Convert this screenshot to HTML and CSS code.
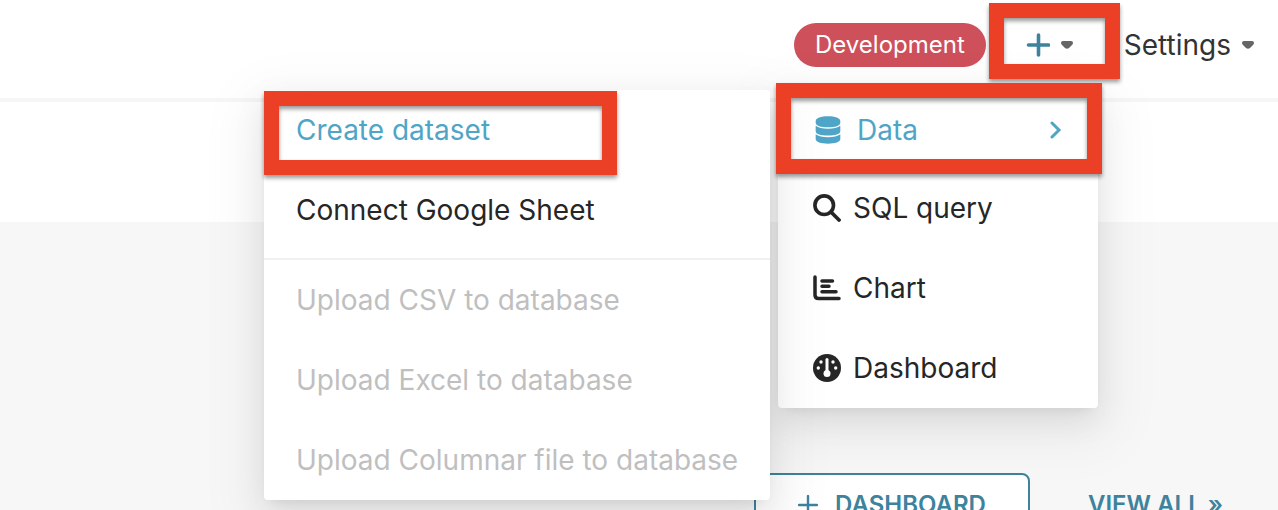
FILE: index.html
```
<!DOCTYPE html>
<html lang="en">
<head>
<meta charset="utf-8">
<title>Home</title>
<link rel="stylesheet" href="styles.css">
</head>
<body>
<header class="header">
  <span class="tag">Development</span>
  <nav class="nav" aria-label="Main">
    <div class="nav-item">
      <button class="new-button" type="button" aria-label="New" aria-expanded="true">
        <svg class="plus" viewBox="0 0 24 24" aria-hidden="true"><path d="M12.500 2v20M2.500 12h20"/></svg>
        <svg class="caret" viewBox="0 0 12 8" aria-hidden="true"><path d="M2 0h8Q12 0 12 2 12 3 11 4L8 7Q6 8.600 4 7L1 4Q0 3 0 2 0 0 2 0z"/></svg>
      </button>
      <span class="highlight highlight-new"></span>
    </div>
    <button class="settings-button" type="button">Settings
      <svg class="caret" viewBox="0 0 12 8" aria-hidden="true"><path d="M2 0h8Q12 0 12 2 12 3 11 4L8 7Q6 8.600 4 7L1 4Q0 3 0 2 0 0 2 0z"/></svg>
    </button>
  </nav>
  <div class="menu menu-new">
    <div class="entry">
      <button class="item item-active" type="button">
        <svg class="icon" viewBox="0 0 28 30" aria-hidden="true"><path fill="currentColor" d="M.8 5.500C.8 2.300 6.500.4 14 .4s13.200 1.900 13.200 5.100v1.600c0 3.200-5.700 4.900-13.200 4.900S.8 10.300.8 7.100zM.8 10.500c2.700 2.200 7.400 3.200 13.200 3.200s10.500-1 13.200-3.200v5.800c0 3.200-5.700 4.700-13.200 4.700S.8 19.500.8 16.300zM.8 19.500c2.700 2.200 7.400 3.200 13.200 3.200s10.500-1 13.200-3.200v5.200c0 3.200-5.700 5-13.200 5S.8 27.900.8 24.700z"/></svg>
        <span class="item-label">Data</span>
        <svg class="chevron" viewBox="0 0 12 18" aria-hidden="true"><path d="M2 2l7 7-7 7"/></svg>
      </button>
      <span class="highlight highlight-data"></span>
    </div>
    <button class="item" type="button">
      <svg class="icon" viewBox="0 0 28 28" aria-hidden="true"><circle cx="11.200" cy="11.200" r="9.300" fill="none" stroke="currentColor" stroke-width="3.600"/><path d="M18 18l8 8" fill="none" stroke="currentColor" stroke-width="3.800" stroke-linecap="round"/></svg>
      <span class="item-label">SQL query</span>
    </button>
    <button class="item" type="button">
      <svg class="icon" viewBox="0 0 28 28" aria-hidden="true"><g fill="none" stroke="currentColor" stroke-width="3.500" stroke-linecap="round"><path d="M2 3v18Q2 24.500 5.500 24.500h20.500"/><path d="M9 7h10.500M9 12.300h7M9 17.700h14"/></g></svg>
      <span class="item-label">Chart</span>
    </button>
    <button class="item" type="button">
      <svg class="icon" viewBox="0 0 28 28" aria-hidden="true"><circle cx="14" cy="14" r="14" fill="currentColor"/><g fill="#fff"><rect x="12.500" y="4" width="3" height="16" rx="1.500"/><circle cx="14" cy="19.500" r="3.500"/><circle cx="8" cy="8" r="1.700"/><circle cx="20" cy="8" r="1.700"/><circle cx="5.300" cy="14" r="1.700"/><circle cx="22.700" cy="14" r="1.700"/></g></svg>
      <span class="item-label">Dashboard</span>
    </button>
    <div class="menu submenu">
      <div class="entry">
        <button class="item item-active" type="button">Create dataset</button>
        <span class="highlight highlight-create"></span>
      </div>
      <button class="item" type="button">Connect Google Sheet</button>
      <hr class="divider">
      <button class="item" type="button" disabled>Upload CSV to database</button>
      <button class="item" type="button" disabled>Upload Excel to database</button>
      <button class="item" type="button" disabled>Upload Columnar file to database</button>
    </div>
  </div>
</header>
<div class="toolbar"></div>
<main class="content">
  <div class="actions">
    <button class="action action-outline" type="button">
      <svg class="action-plus" viewBox="0 0 20 20" aria-hidden="true"><path d="M10 1v18M1 10h18"/></svg>
      Dashboard
    </button>
    <a class="action" href="#">View all »</a>
  </div>
</main>
</body>
</html>
```
FILE: styles.css
```
* { box-sizing: border-box; }

body {
  display: flex;
  flex-direction: column;
  height: 100vh;
  margin: 0;
  overflow: hidden;
  background: #f7f7f7;
  color: #262626;
  font-family: Inter, "Liberation Sans", sans-serif;
  font-size: 28px;
  line-height: 44px;
}

button {
  margin: 0;
  padding: 0;
  border: 0;
  background: none;
  color: inherit;
  font: inherit;
}

.header {
  position: relative;
  z-index: 1;
  display: flex;
  flex-shrink: 0;
  justify-content: flex-end;
  padding: 23px 24px 31px;
  border-bottom: 4px solid #f6f6f6;
  background: #fff;
}

.tag {
  padding: 0 21px;
  border-radius: 22px;
  background: #ce505a;
  color: #fff;
  font-size: 24px;
}

.nav { display: flex; }

.nav-item { position: relative; }

.new-button,
.settings-button {
  display: flex;
  align-items: center;
  gap: 11px;
  height: 44px;
}

.new-button { padding: 0 51px 0 40px; }
.settings-button { color: #333; }

.plus {
  width: 24px;
  height: 24px;
  fill: none;
  stroke: #3d839d;
  stroke-width: 3.6;
  stroke-linecap: round;
}

.caret {
  width: 12px;
  height: 8px;
  fill: #666;
}

.menu {
  position: absolute;
  border-radius: 4px;
  background: #fff;
  box-shadow:
    0 6px 12px -8px rgba(0, 0, 0, 0.12),
    0 12px 32px rgba(0, 0, 0, 0.08),
    0 18px 56px 16px rgba(0, 0, 0, 0.05);
}

.menu-new {
  top: 88px;
  right: 180px;
  width: 320px;
}

.submenu {
  top: 2px;
  right: calc(100% + 8px);
  width: 506px;
}

.entry { position: relative; }

.item {
  display: flex;
  align-items: center;
  gap: 12px;
  width: 100%;
  height: 80px;
  padding: 0 32px;
  text-align: left;
  white-space: nowrap;
}

.menu-new > .item { padding: 0 35px; }

.menu-new > .entry > .item {
  gap: 15px;
  padding: 4px 36px 0;
}

.item-active { color: #4fa5c7; }
.item:disabled { color: #bfbfbf; }
.item-label { flex: 1; }

.icon {
  width: 28px;
  height: 28px;
}

.chevron {
  width: 12px;
  height: 18px;
  fill: none;
  stroke: currentColor;
  stroke-width: 3;
  stroke-linecap: round;
}

.divider {
  height: 2px;
  margin: 8px 0 0;
  border: 0;
  background: #f0f0f0;
}

.highlight {
  position: absolute;
  z-index: 2;
  border: 15px solid #eb4025;
  filter: drop-shadow(0 3px 2px rgba(0, 0, 0, 0.4));
  pointer-events: none;
}

.highlight-new { inset: -20px 4px -12px 3px; }
.highlight-data { inset: -5px -4px -6px -2px; }
.highlight-create { inset: 1px 153px -5px 0; }

.toolbar {
  flex-shrink: 0;
  height: 120px;
  background: #fff;
}

.content { padding: 251px 55px 0; }

.actions {
  display: flex;
  justify-content: flex-end;
  gap: 58px;
}

.action {
  display: flex;
  align-items: center;
  gap: 17px;
  height: 64px;
  color: #3d839d;
  font-size: 24px;
  font-weight: 600;
  text-decoration: none;
  text-transform: uppercase;
}

.action-outline {
  padding: 0 42px;
  border: 2px solid #3d839d;
  border-radius: 8px;
  background: #fff;
}

.action-plus {
  width: 20px;
  height: 20px;
  fill: none;
  stroke: currentColor;
  stroke-width: 2.4;
  stroke-linecap: round;
}
```
